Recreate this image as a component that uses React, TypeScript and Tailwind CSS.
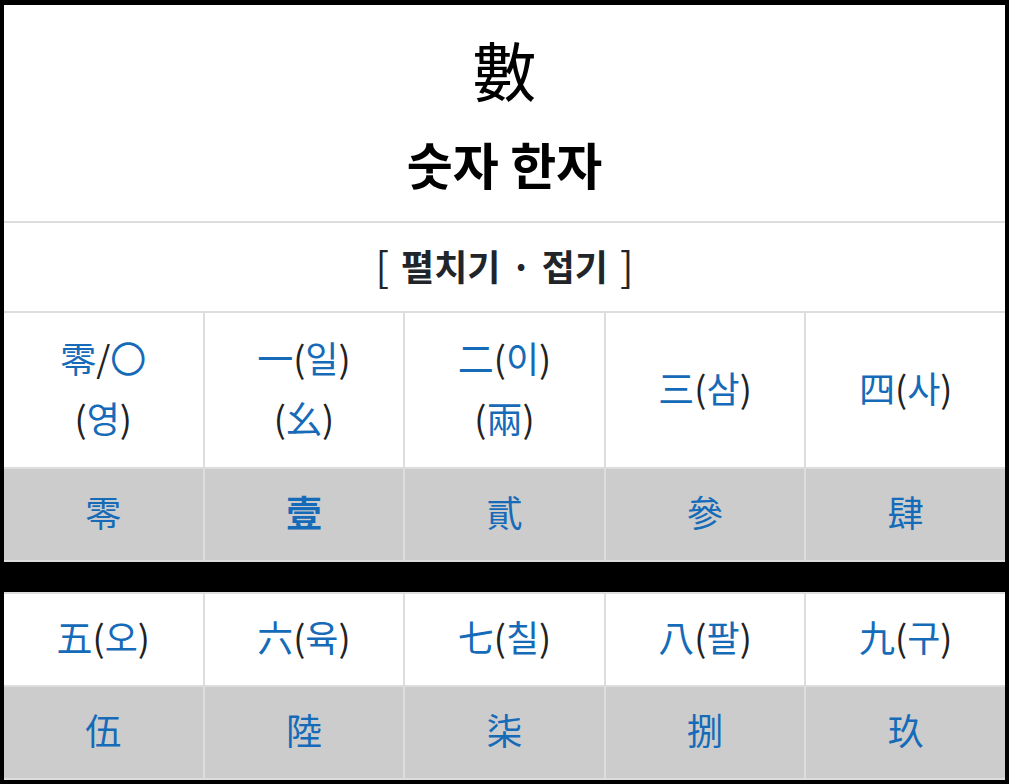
import React from "react"

const font = { fontFamily: '"Noto Sans CJK KR", "Noto Sans", sans-serif' }

type Part = { t: string; dark?: boolean }

/** one line of a cell, blue glyphs with dark punctuation */
function Line({ parts }: { parts: Part[] }) {
  return (
    <div className="leading-[60px] whitespace-nowrap">
      {parts.map((p, i) => (
        <span key={i} className={p.dark ? "text-[#222222]" : "text-[#166bb8]"}>
          {p.t}
        </span>
      ))}
    </div>
  )
}

const b = (hanja: string, hangul: string): Part[] => [
  { t: hanja },
  { t: "(", dark: true },
  { t: hangul },
  { t: ")", dark: true },
]

const topRow: Part[][][] = [
  [[{ t: "零" }, { t: "/", dark: true }, { t: "〇" }], [{ t: "(", dark: true }, { t: "영" }, { t: ")", dark: true }]],
  [b("一", "일"), [{ t: "(", dark: true }, { t: "幺" }, { t: ")", dark: true }]],
  [b("二", "이"), [{ t: "(", dark: true }, { t: "兩" }, { t: ")", dark: true }]],
  [b("三", "삼")],
  [b("四", "사")],
]

const bottomRow: Part[][][] = [
  [b("五", "오")],
  [b("六", "육")],
  [b("七", "칠")],
  [b("八", "팔")],
  [b("九", "구")],
]

const formal1 = ["零", "壹", "貳", "參", "肆"]
const formal2 = ["伍", "陸", "柒", "捌", "玖"]

function WhiteRow({ cells, tall }: { cells: Part[][][]; tall?: boolean }) {
  return (
    <div className="grid grid-cols-5 gap-x-[2px] border-t-2 border-[#dddddd] bg-[#dddddd]">
      {cells.map((lines, i) => (
        <div
          key={i}
          className={`flex flex-col items-center justify-center bg-white pb-[7px] text-[36px] ${tall ? "h-[154px]" : "h-[91px]"}`}
        >
          {lines.map((parts, j) => (
            <Line key={j} parts={parts} />
          ))}
        </div>
      ))}
    </div>
  )
}

function GrayRow({ chars, boldIndex }: { chars: string[]; boldIndex?: number }) {
  return (
    <div className="grid grid-cols-5 gap-x-[2px] border-y-2 border-[#dddddd] bg-[#dddddd]">
      {chars.map((c, i) => (
        <div
          key={i}
          className={`flex h-[91px] items-center justify-center bg-[#cccccc] pb-[7px] text-[36px] leading-[60px] text-[#166bb8] ${i === boldIndex ? "font-bold" : ""}`}
        >
          {c}
        </div>
      ))}
    </div>
  )
}

export default function App() {
  return (
    <div className="h-[784px] w-[1009px] overflow-hidden bg-black px-[4px] pt-[5px]" style={font}>
      <div className="bg-white">
        {/* title */}
        <div className="flex h-[216px] flex-col items-center pt-[31px] text-black">
          <div className="text-[64px] leading-[64px]">數</div>
          <div className="mt-[38px] text-[50px] font-bold leading-[50px]">숫자 한자</div>
        </div>
        {/* toggle */}
        <div className="flex h-[90px] items-center justify-center border-t-2 border-[#dddddd] pb-[5px] text-[36px] text-[#212529]">
          <span className="text-[40px]">[</span>
          <span className="ml-[12px] font-bold">펼치기</span>
          <span className="mx-[10px] font-bold">·</span>
          <span className="font-bold">접기</span>
          <span className="ml-[12px] text-[40px]">]</span>
        </div>
        <WhiteRow cells={topRow} tall />
        <GrayRow chars={formal1} boldIndex={1} />
      </div>
      <div className="h-[30px]" />
      <div className="bg-white">
        <WhiteRow cells={bottomRow} />
        <GrayRow chars={formal2} />
      </div>
    </div>
  )
}
